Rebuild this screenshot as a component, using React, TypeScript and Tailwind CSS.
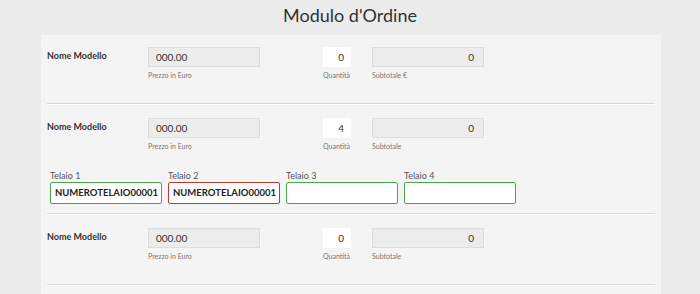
const font = "font-['Lato','Open_Sans',sans-serif]";

type Row = { qty: string; subLabel: string; telai?: { value: string; color: 'green' | 'red' }[] };

const rows: Row[] = [
  { qty: '0', subLabel: 'Subtotale €' },
  {
    qty: '4',
    subLabel: 'Subtotale',
    telai: [
      { value: 'NUMEROTELAIO00001', color: 'green' },
      { value: 'NUMEROTELAIO00001', color: 'red' },
      { value: '', color: 'green' },
      { value: '', color: 'green' },
    ],
  },
  { qty: '0', subLabel: 'Subtotale' },
];

function OrderRow({ row, first }: { row: Row; first: boolean }) {
  return (
    <div className={first ? 'pt-3' : 'pt-[13px]'}>
      <div className="flex items-start pl-[6px]">
        <div className="w-[101px] pt-[2px] text-[9px] font-bold text-[#333]">Nome Modello</div>
        <div className="w-[112px]">
          <div className="h-5 border border-[#dedede] bg-[#ececec] pl-[7px] text-[10px] leading-[18px] text-[#333]">000.00</div>
          <div className="mt-[3px] text-[7px] text-[#777]">Prezzo in Euro</div>
        </div>
        <div className="ml-[63px] w-[28px]">
          <div className="h-5 bg-white pr-[7px] text-right text-[10px] leading-5 text-[#333]">{row.qty}</div>
          <div className="mt-[3px] whitespace-nowrap text-[7px] text-[#777]">Quantità</div>
        </div>
        <div className="ml-[21px] w-[112px]">
          <div className="h-5 border border-[#dedede] bg-[#ececec] pr-[9px] text-right text-[10px] leading-[18px] text-[#333]">0</div>
          <div className="mt-[3px] text-[7px] text-[#777]">{row.subLabel}</div>
        </div>
      </div>
      {row.telai ? (
        <div className="mt-[20px] flex gap-[6px] pl-[9px]">
          {row.telai.map((t, i) => (
            <div key={i} className="w-[112px]">
              <div className="mb-[1px] text-[9px] leading-[10px] text-[#555]">Telaio {i + 1}</div>
              <div
                className={
                  'h-[22px] rounded-[2px] border bg-white pl-[4px] text-[9.5px] font-bold leading-[20px] text-[#222] ' +
                  (t.color === 'green' ? 'border-[#4aa64a]' : 'border-[#c0392b]')
                }
              >
                {t.value}
              </div>
            </div>
          ))}
        </div>
      ) : null}
      <div
        className={
          (row.telai ? 'mt-[9px]' : 'mt-[22px]') +
          ' mx-[6px] border-t border-b border-t-[#d6d6d6] border-b-white'
        }
      />
    </div>
  );
}

export default function App() {
  return (
    <div className={`${font} h-[294px] w-[700px] overflow-hidden bg-[#ebebeb]`}>
      <h1 className="pt-[3px] text-center text-[18px] font-normal leading-[24px] text-[#333]">Modulo d'Ordine</h1>
      <div className="ml-[41px] mt-[8px] w-[620px] bg-[#f4f4f4] pb-4">
        {rows.map((r, i) => (
          <OrderRow key={i} row={r} first={i === 0} />
        ))}
      </div>
    </div>
  );
}
